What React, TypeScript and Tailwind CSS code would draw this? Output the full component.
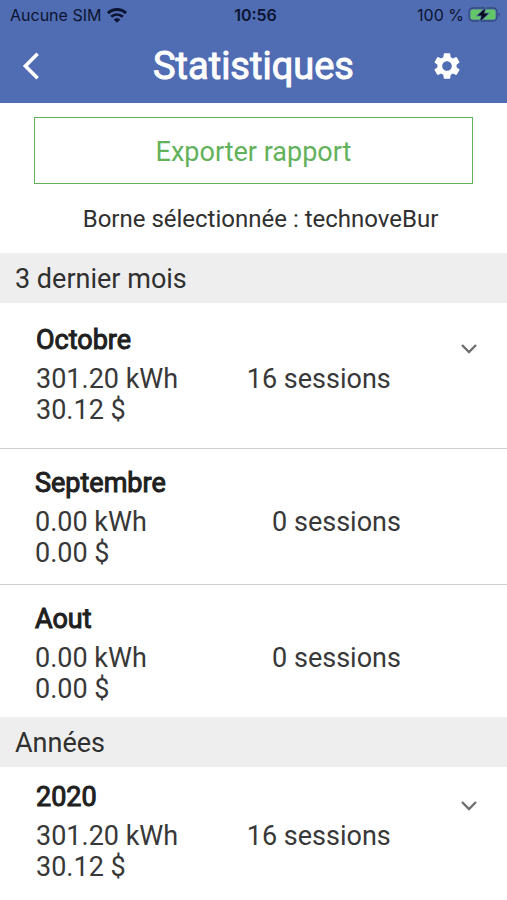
import { MdSettings } from "react-icons/md";

type Period = {
  name: string;
  energy: string;
  cost: string;
  sessions: string;
  expandable?: boolean;
};

const months: Period[] = [
  { name: "Octobre", energy: "301.20 kWh", cost: "30.12 $", sessions: "16 sessions", expandable: true },
  { name: "Septembre", energy: "0.00 kWh", cost: "0.00 $", sessions: "0 sessions" },
  { name: "Aout", energy: "0.00 kWh", cost: "0.00 $", sessions: "0 sessions" },
];

const years: Period[] = [
  { name: "2020", energy: "301.20 kWh", cost: "30.12 $", sessions: "16 sessions", expandable: true },
];

function WifiIcon() {
  return (
    <svg width="20" height="15" viewBox="0 0 20 15" fill="none" stroke="#0b1430" aria-hidden="true">
      <path d="M1 5.2a13 13 0 0 1 18 0" strokeWidth="3" />
      <path d="M4.2 8.8a8.4 8.4 0 0 1 11.6 0" strokeWidth="2.7" />
      <path d="M10 14.8 6.7 11.5a4.7 4.7 0 0 1 6.6 0z" fill="#0b1430" stroke="none" />
    </svg>
  );
}

function BatteryIcon() {
  return (
    <svg width="33" height="16" viewBox="0 0 33 16" aria-hidden="true">
      <rect x="1" y="1" width="28" height="13" rx="4" fill="none" stroke="#34497f" strokeWidth="1.3" />
      <rect x="2.5" y="2.5" width="25" height="10" rx="2" fill="#63c667" />
      <path d="M30.7 5.5c1.6.6 1.6 3.4 0 4z" fill="#34497f" />
      <path
        d="M17.4 1.2 9.6 8.5h4.2l-1.5 5.4 8-7.3h-4.5z"
        fill="#050a18"
        stroke="#506cb3"
        strokeWidth="1.6"
        paintOrder="stroke"
      />
    </svg>
  );
}

function StatusBar() {
  return (
    <div className="grid h-[30px] grid-cols-3 items-center pr-[6px] pl-[10px] font-['Inter',sans-serif] text-base text-[#0b1430]">
      <div className="flex items-center gap-[6px]">
        <span>Aucune SIM</span>
        <WifiIcon />
      </div>
      <span className="text-center font-semibold">10:56</span>
      <div className="flex items-center justify-end gap-1">
        <span>100 %</span>
        <BatteryIcon />
      </div>
    </div>
  );
}

function Header() {
  return (
    <header className="bg-[#506cb3]">
      <StatusBar />
      <div className="grid h-[73px] grid-cols-[76px_1fr_76px] items-center pb-[2px] text-white">
        <button type="button" aria-label="Retour" className="flex h-12 w-[62px] items-center justify-center">
          <svg width="18" height="28" viewBox="0 0 18 28" fill="none" stroke="currentColor" strokeWidth="3.6" aria-hidden="true">
            <path d="M15.6 1.8 3.4 14l12.2 12.2" />
          </svg>
        </button>
        <h1 className="text-center text-[38px] leading-[44px] [-webkit-text-stroke:1px_white]">Statistiques</h1>
        <button type="button" aria-label="Paramètres" className="flex h-12 items-center justify-start">
          <MdSettings className="size-8" />
        </button>
      </div>
    </header>
  );
}

function SectionTitle({ children }: { children: string }) {
  return (
    <h2 className="bg-[#eeeeee] px-[15px] pt-[10px] pb-2 text-[27px] leading-8 text-[#303030]">{children}</h2>
  );
}

function PeriodDetails({ period }: { period: Period }) {
  return (
    <>
      <h3 className="mb-2 text-[#202020] [-webkit-text-stroke:1px_#202020]">{period.name}</h3>
      <div className="grid grid-cols-2">
        <p>
          {period.energy}
          <br />
          {period.cost}
        </p>
        <p className="text-center">{period.sessions}</p>
      </div>
    </>
  );
}

function PeriodRow({ period, className }: { period: Period; className: string }) {
  return (
    <li className={`flex text-[27px] leading-[31px] text-[#383838] ${className}`}>
      <div className={`grow ${period.expandable ? "pl-9" : "pr-[70px] pl-[35px]"}`}>
        <PeriodDetails period={period} />
      </div>
      {period.expandable && (
        <button
          type="button"
          aria-label={`Détails ${period.name}`}
          className="ml-[38px] flex h-12 w-[56px] items-center pl-[10px] text-[#707070]"
        >
          <svg width="16" height="10" viewBox="0 0 16 10" fill="none" stroke="currentColor" strokeWidth="2.4" aria-hidden="true">
            <path d="m1 1 7 7 7-7" />
          </svg>
        </button>
      )}
    </li>
  );
}

export default function App() {
  return (
    <div className="min-h-screen bg-white font-['Roboto',sans-serif]">
      <Header />
      <main>
        <div className="px-[34px] pt-[14px]">
          <button
            type="button"
            className="h-[67px] w-full border border-[#62b15b] pt-1 text-[27px] text-[#62b15b]"
          >
            Exporter rapport
          </button>
        </div>
        <p className="pt-5 pr-0 pb-[19px] pl-[14px] text-center text-2xl leading-[30px] text-[#303030]">
          Borne sélectionnée : technoveBur
        </p>
        <section>
          <SectionTitle>3 dernier mois</SectionTitle>
          <ul className="divide-y divide-[#cfcfcf]">
            <PeriodRow period={months[0]} className="pt-[22px] pb-[22px]" />
            <PeriodRow period={months[1]} className="pt-[19px] pb-[15px]" />
            <PeriodRow period={months[2]} className="pt-[19px] pb-3" />
          </ul>
        </section>
        <section>
          <SectionTitle>Années</SectionTitle>
          <ul>
            <PeriodRow period={years[0]} className="pt-[15px] pb-[18px]" />
          </ul>
        </section>
      </main>
    </div>
  );
}
